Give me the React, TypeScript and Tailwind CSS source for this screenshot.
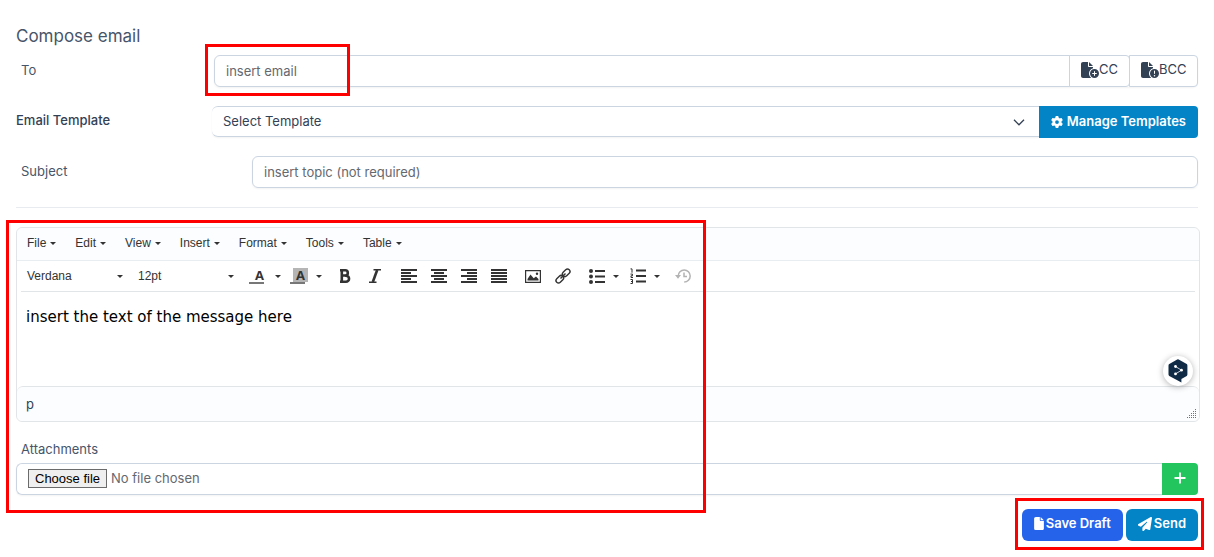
import type { ReactNode } from 'react';
import {
  FaFile,
  FaFileCircleExclamation,
  FaFileCirclePlus,
  FaGear,
  FaPaperPlane,
} from 'react-icons/fa6';

const menus = ['File', 'Edit', 'View', 'Insert', 'Format', 'Tools', 'Table'];

const Caret = () => (
  <svg viewBox="0 0 6 3" className="w-[6px] h-[3px] shrink-0" fill="currentColor" aria-hidden="true">
    <path d="M0 0h6L3 3z" />
  </svg>
);

const Highlight = ({ className }: { className: string }) => (
  <div className={`absolute border-3 border-[#ff0000] pointer-events-none ${className}`} />
);

interface ToolButtonProps {
  label: string;
  children: ReactNode;
}

const ToolButton = ({ label, children }: ToolButtonProps) => (
  <button type="button" aria-label={label} className="w-[30px] h-[30px] pl-[2px] flex items-center justify-center">
    {children}
  </button>
);

const SplitButton = ({ label, children }: ToolButtonProps) => (
  <div className="flex">
    <ToolButton label={label}>{children}</ToolButton>
    <button type="button" aria-label={`${label} options`} className="w-[11px] pr-px flex items-center justify-center">
      <Caret />
    </button>
  </div>
);

const ListBox = ({ value }: { value: string }) => (
  <button type="button" className="w-[111px] h-[30px] pl-[10px] pr-[5px] flex items-center justify-between">
    {value}
    <Caret />
  </button>
);

const AlignIcon = ({ short }: { short: string }) => (
  <svg viewBox="0 0 16 14" className="w-4 h-[14px]" fill="none" stroke="currentColor" strokeWidth="2">
    <path d="M0 1h16M0 7h16M0 13h16" />
    <path d={short} />
  </svg>
);

const ColorIcon = ({ shaded }: { shaded?: boolean }) => (
  <svg viewBox="0 0 20 18" className="w-5 h-[18px]">
    {shaded && <path d="M3 1h15v14H3z" fill="#b5b5b5" />}
    <text x="10.500" y="13" textAnchor="middle" fontSize="13" fontWeight="700" fill="#333" fontFamily="Open Sans, sans-serif">
      A
    </text>
    <path d="M0 15h15v2H0z" fill="#777" />
  </svg>
);

const Toolbar = () => (
  <div role="toolbar" aria-label="Formatting" className="flex flex-wrap items-center gap-1 text-[#333]">
    <div className="flex">
      <ListBox value="Verdana" />
      <ListBox value="12pt" />
    </div>
    <div className="flex">
      <SplitButton label="Text color">
        <ColorIcon />
      </SplitButton>
      <SplitButton label="Background color">
        <ColorIcon shaded />
      </SplitButton>
    </div>
    <div className="flex">
      <ToolButton label="Bold">
        <svg viewBox="0 0 12 14" className="w-3 h-[14px]" fill="none" stroke="currentColor" strokeWidth="2.6">
          <path d="M2.800 1.300v11.400M1 1.300h5.200a2.600 2.600 0 0 1 0 5.200H2.300M6.200 6.600h.8a3 3 0 0 1 0 6.100H1" />
        </svg>
      </ToolButton>
      <ToolButton label="Italic">
        <svg viewBox="0 0 12 14" className="w-3 h-[14px]" fill="none" stroke="currentColor">
          <path d="M4.500 .8H12M0 13.200h7.500" strokeWidth="1.400" />
          <path d="M8.200 1 3.800 13" strokeWidth="2.600" />
        </svg>
      </ToolButton>
    </div>
    <div className="flex">
      <ToolButton label="Align left">
        <AlignIcon short="M0 4h10M0 10h10" />
      </ToolButton>
      <ToolButton label="Align center">
        <AlignIcon short="M3 4h10M3 10h10" />
      </ToolButton>
      <ToolButton label="Align right">
        <AlignIcon short="M6 4h10M6 10h10" />
      </ToolButton>
      <ToolButton label="Justify">
        <AlignIcon short="M0 4h16M0 10h16" />
      </ToolButton>
    </div>
    <div className="flex">
      <ToolButton label="Insert image">
        <svg viewBox="0 0 16 13" className="w-4 h-[13px]" fill="currentColor">
          <path d="M0 0h16v13H0zM1.200 1.200v10.600h13.600V1.200z" fillRule="evenodd" />
          <path d="M2.500 10.500V9l3-4.500 3.200 3.800L11 6.500l2.500 2.500v1.500z" />
          <circle cx="12" cy="3.800" r="1.200" />
        </svg>
      </ToolButton>
      <ToolButton label="Insert link">
        <svg viewBox="0 0 16 16" className="w-4 h-4" fill="none" stroke="currentColor" strokeWidth="1.400">
          <rect x="-4.300" y="-2.500" width="8.600" height="5" rx="2.500" transform="translate(11.200 4.800) rotate(-45)" />
          <rect x="-4.300" y="-2.500" width="8.600" height="5" rx="2.500" transform="translate(4.800 11.200) rotate(-45)" />
          <path d="M5.500 10.500l5-5" />
        </svg>
      </ToolButton>
    </div>
    <div className="flex">
      <SplitButton label="Bullet list">
        <svg viewBox="0 0 16 15" className="w-4 h-[15px]" fill="currentColor">
          <circle cx="2" cy="2" r="2" />
          <circle cx="2" cy="7.500" r="2" />
          <circle cx="2" cy="13" r="2" />
          <path d="M6 1h10v2H6zM6 6.500h10v2H6zM6 12h10v2H6z" />
        </svg>
      </SplitButton>
      <SplitButton label="Numbered list">
        <svg viewBox="0 0 16 16" className="w-4 h-4" fill="none" stroke="currentColor">
          <path d="M6 2.500h10M6 8h10M6 13.500h10" strokeWidth="2" />
          <path d="M.5 .9h1.500v3.800M.5 6.100h2v1.700h-1.500v1.700h2M.5 11.500h2v4h-2M1 13.500h1.500" />
        </svg>
      </SplitButton>
    </div>
    <ToolButton label="Restore last draft">
      <svg viewBox="0 0 16 14" className="w-4 h-[14px] text-[#b3b3b3]" fill="none" stroke="currentColor" strokeWidth="1.500">
        <path d="M3.200 7a6 6 0 1 1 6 6" />
        <path d="M9 3.500V7.500h3" />
        <path d="M0 6h6L3 9.800z" fill="currentColor" stroke="none" />
      </svg>
    </ToolButton>
  </div>
);

const Editor = () => (
  <div className="relative -mr-[2px] border border-[#e2e5e8] rounded-md font-['Liberation_Sans',Arial,sans-serif] text-xs">
    <div role="menubar" className="flex flex-wrap items-center gap-[19px] h-[33px] pl-[10px] pb-[2px] border-b border-[#e8edf1] bg-[#fbfdfe] rounded-t-md text-[#333]">
      {menus.map((menu) => (
        <button key={menu} type="button" role="menuitem" className="flex items-center gap-1">
          {menu}
          <Caret />
        </button>
      ))}
    </div>
    <Toolbar />
    <div className="mx-1 border-t border-[#e2e5e8]" />
    <div
      contentEditable
      suppressContentEditableWarning
      role="textbox"
      aria-label="Message"
      className="h-[94px] px-[9px] py-[13px] font-['DejaVu_Sans',Verdana,sans-serif] text-[15px] leading-6 text-black outline-none"
    >
      <p>insert the text of the message here</p>
    </div>
    <div className="flex items-center h-[35px] px-[9px] pt-[2px] border-t border-[#e2e5e8] rounded-md bg-[#fbfdfe] font-[Inter,sans-serif] text-[13px] text-[#334155]">
      p
    </div>
    <svg viewBox="0 0 9 9" className="absolute right-[3px] bottom-[3px] w-[9px] h-[9px]" fill="#64748b">
      <path d="M8 0h1v1H8zM8 2h1v1H8zM6 2h1v1H6zM8 4h1v1H8zM6 4h1v1H6zM4 4h1v1H4zM8 6h1v1H8zM6 6h1v1H6zM4 6h1v1H4zM2 6h1v1H2zM8 8h1v1H8zM6 8h1v1H6zM4 8h1v1H4zM2 8h1v1H2zM0 8h1v1H0z" />
    </svg>
    <button
      type="button"
      aria-label="Translate"
      className="absolute right-[6px] bottom-[35px] w-[30px] h-[30px] flex items-center justify-center rounded-full bg-white shadow-[0_1px_6px_rgba(0,0,0,0.3)]"
    >
      <svg viewBox="0 0 20 24" className="w-5 h-6">
        <path d="M9.200.5a1.500 1.500 0 0 1 1.500 0l8 4.600c.4.300.7.700.7 1.300v9.200c0 .6-.3 1-.7 1.300L13.400 20v3.500L8.800 21 1.300 16.900c-.5-.3-.8-.7-.8-1.300V6.400c0-.6.3-1 .8-1.300z" fill="#0f2b46" />
        <path d="m7.500 7.500 6 3.700-6 3.700" fill="none" stroke="#fff" strokeWidth=".8" />
        <circle cx="7.500" cy="7.500" r="1.400" fill="#fff" />
        <circle cx="13.500" cy="11.200" r="1.400" fill="#fff" />
        <circle cx="7.500" cy="14.900" r="1.400" fill="#fff" />
      </svg>
    </button>
  </div>
);

export default function App() {
  return (
    <form className="bg-white px-4 pt-6 pb-4 font-[Inter,sans-serif] text-[13px] text-[#334155]" onSubmit={(e) => e.preventDefault()}>
      <h1 className="text-[17px] leading-6 text-[#475569]">Compose email</h1>

      <div className="mt-[7px] flex">
        <label htmlFor="to" className="w-[198px] shrink-0 pl-[5px] leading-[31px] text-[#475569]">
          To
        </label>
        <div className="relative flex flex-1 h-8 rounded-md shadow-xs">
          <input
            id="to"
            type="text"
            placeholder="insert email"
            className="flex-1 min-w-0 px-[11px] pt-[2px] border border-[#cbd5e1] rounded-l-md placeholder:text-[#64686f] outline-none"
          />
          <button type="button" className="flex items-center w-[61px] pl-[11px] pb-[2px] -ml-px border border-[#cbd5e1] rounded-r-sm">
            <FaFileCirclePlus className="w-[18px] h-4 shrink-0" />
            CC
          </button>
          <button type="button" className="flex items-center w-[69px] pl-[11px] pb-[2px] -ml-px border border-[#cbd5e1] rounded-r-sm">
            <FaFileCircleExclamation className="w-[18px] h-4 shrink-0" />
            BCC
          </button>
          <Highlight className="-left-[9px] -top-[11px] w-[145px] h-[52px]" />
        </div>
      </div>

      <div className="mt-[19px] flex">
        <label htmlFor="template" className="w-[196px] shrink-0 leading-[29px] font-medium">
          Email Template
        </label>
        <div className="flex flex-1 h-8">
          <div className="relative flex-1">
            <select id="template" className="w-full h-[31px] px-[11px] border-y border-[#cbd5e1] rounded-l-md shadow-xs appearance-none bg-white outline-none">
              <option>Select Template</option>
            </select>
            <svg viewBox="0 0 12 7" className="absolute right-[14px] top-[13px] w-3 h-[7px] pointer-events-none" fill="none" stroke="currentColor" strokeWidth="1.300">
              <path d="m1 .8 5 5 5-5" />
            </svg>
          </div>
          <button type="button" className="flex items-center gap-1 px-3 pb-px rounded-r-sm bg-[#0284c7] text-white font-semibold">
            <FaGear className="w-3 h-3" />
            Manage Templates
          </button>
        </div>
      </div>

      <div className="mt-[18px] flex">
        <label htmlFor="subject" className="w-[236px] shrink-0 pl-[5px] leading-[30px] text-[#475569]">
          Subject
        </label>
        <input
          id="subject"
          type="text"
          placeholder="insert topic (not required)"
          className="flex-1 min-w-0 h-8 px-[11px] border border-[#cbd5e1] rounded-md shadow-xs placeholder:text-[#64686f] outline-none"
        />
      </div>

      <hr className="mt-[19px] border-[#e8ecf0]" />

      <div className="relative mt-[19px]">
        <Editor />
        <div className="mt-[17px] pl-[5px] leading-5 text-[#475569]">Attachments</div>
        <div className="mt-1 flex h-8">
          <label
            htmlFor="attachment"
            className="flex flex-1 items-center gap-1 px-[11px] pb-px border border-r-0 border-[#cbd5e1] rounded-l-md shadow-xs text-[#64686f]"
          >
            <input id="attachment" type="file" aria-label="Attachments" className="sr-only" />
            <span className="flex items-center h-[19px] px-[6px] border border-[#6b6b6b] bg-[#efefef] font-['Liberation_Sans',Arial,sans-serif] text-[13px] text-black">
              Choose file
            </span>
            No file chosen
          </label>
          <button type="button" aria-label="Add attachment" className="w-9 flex items-center justify-center pb-[3px] rounded-r-sm bg-[#22c55e] text-white">
            <svg viewBox="0 0 12 12" className="w-3 h-3" stroke="currentColor" strokeWidth="1.800">
              <path d="M6 .5v11M.5 6h11" />
            </svg>
          </button>
        </div>
        <Highlight className="-left-[10px] -top-[7px] -bottom-[18px] w-[700px]" />
      </div>

      <div className="mt-[14px] flex justify-end">
        <div className="relative flex gap-[3px] font-semibold text-white">
          <button type="submit" className="flex items-center gap-[2px] h-8 px-3 pb-[3px] rounded-md bg-[#2563eb]">
            <FaFile className="w-[10px] h-[13px]" />
            Save Draft
          </button>
          <button type="submit" className="flex items-center gap-[2px] h-8 px-3 pb-[3px] rounded-md bg-[#0284c7]">
            <FaPaperPlane className="w-[14px] h-[14px]" />
            Send
          </button>
          <Highlight className="-left-[7px] -right-[6px] -top-[11px] -bottom-[9px]" />
        </div>
      </div>
    </form>
  );
}
